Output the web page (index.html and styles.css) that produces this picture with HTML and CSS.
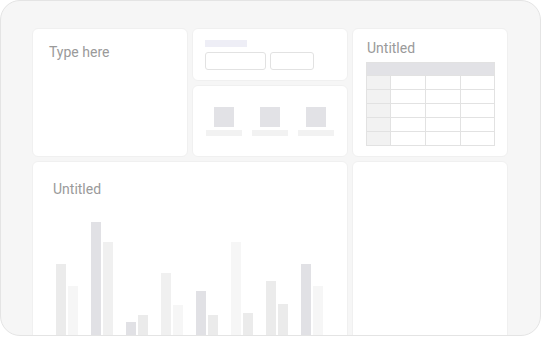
FILE: index.html
```html
<!DOCTYPE html>
<html lang="en">
<head>
<meta charset="utf-8">
<title>Dashboard</title>
<link rel="stylesheet" href="styles.css">
</head>
<body>
<div class="frame">
  <div class="grid">
    <div class="card note"><div class="title">Type here</div></div>
    <div class="mid">
      <div class="card form">
        <div class="label-bar"></div>
        <div class="inputs"><div class="input wide"></div><div class="input narrow"></div></div>
      </div>
      <div class="card icons">
        <div class="item"><div class="sq"></div><div class="cap"></div></div>
        <div class="item"><div class="sq"></div><div class="cap"></div></div>
        <div class="item"><div class="sq"></div><div class="cap"></div></div>
      </div>
    </div>
    <div class="card tablecard">
      <div class="title">Untitled</div>
      <div class="table">
        <div class="th"></div>
        <div class="c first"></div><div class="c"></div><div class="c"></div><div class="c"></div>
        <div class="c first"></div><div class="c"></div><div class="c"></div><div class="c"></div>
        <div class="c first"></div><div class="c"></div><div class="c"></div><div class="c"></div>
        <div class="c first"></div><div class="c"></div><div class="c"></div><div class="c"></div>
        <div class="c first"></div><div class="c"></div><div class="c"></div><div class="c"></div>
      </div>
    </div>
    <div class="card chartcard">
      <div class="title">Untitled</div>
      <div class="chart">
        <div class="group"><div class="bar mid-tone" style="height:76px"></div><div class="bar light" style="height:54px"></div></div>
        <div class="group"><div class="bar dark" style="height:118px"></div><div class="bar soft" style="height:98px"></div></div>
        <div class="group"><div class="bar dark" style="height:18px"></div><div class="bar mid-tone" style="height:25px"></div></div>
        <div class="group"><div class="bar soft" style="height:67px"></div><div class="bar light" style="height:35px"></div></div>
        <div class="group"><div class="bar dark" style="height:49px"></div><div class="bar mid-tone" style="height:25px"></div></div>
        <div class="group"><div class="bar light" style="height:98px"></div><div class="bar mid-tone" style="height:27px"></div></div>
        <div class="group"><div class="bar mid-tone" style="height:59px"></div><div class="bar mid-tone" style="height:36px"></div></div>
        <div class="group"><div class="bar dark" style="height:76px"></div><div class="bar light" style="height:54px"></div></div>
      </div>
    </div>
    <div class="card empty"></div>
  </div>
</div>
</body>
</html>
```

FILE: styles.css
```css
* { box-sizing: border-box; }
html, body { margin: 0; padding: 0; background: #fff; }
body { font-family: Roboto, "Noto Sans", sans-serif; }

.frame {
  width: 541px;
  height: 336px;
  border: 1px solid #e4e4e4;
  border-radius: 20px;
  background: #f6f6f6;
  padding: 27px 0 0 31px;
  overflow: hidden;
}

.grid {
  display: grid;
  grid-template-columns: 156px 156px 156px;
  grid-template-rows: 129px 220px;
  gap: 4px;
}

.card {
  background: #fff;
  border: 1px solid #f0f0f0;
  border-radius: 6px;
}

.title {
  font-size: 14px;
  line-height: 16px;
  color: #9a9a9a;
}

.note { padding: 15px 16px; }

.mid {
  display: grid;
  grid-template-rows: 53px 72px;
  gap: 4px;
}

.form { padding: 11px 12px; }
.label-bar { width: 42px; height: 7px; background: #eeeef6; }
.inputs { display: flex; gap: 4px; margin-top: 5px; }
.input { height: 18px; border: 1px solid #e2e2e2; border-radius: 3px; }
.input.wide { width: 61px; }
.input.narrow { width: 44px; }

.icons {
  display: flex;
  justify-content: center;
  align-items: center;
  gap: 10px;
}
.item { display: flex; flex-direction: column; align-items: center; gap: 3px; }
.sq { width: 20px; height: 20px; background: #e2e2e6; }
.cap { width: 36px; height: 6px; background: #f2f2f2; }

.tablecard { padding: 11px 13px; }
.tablecard .title { margin-left: 1px; }
.table {
  margin-top: 6px;
  display: grid;
  grid-template-columns: 24px 35px 35px 34px;
  width: 129px;
  border-left: 1px solid #e2e2e2;
  border-top: 1px solid #e2e2e2;
}
.th {
  grid-column: 1 / 5;
  height: 13px;
  background: #e2e2e6;
  border-right: 1px solid #e2e2e2;
  border-bottom: 1px solid #e2e2e2;
}
.c {
  height: 14px;
  border-right: 1px solid #e2e2e2;
  border-bottom: 1px solid #e2e2e2;
}
.c.first { background: #f2f2f2; }

.chartcard { grid-column: 1 / 3; padding: 19px 20px 0; }
.chart {
  display: flex;
  align-items: flex-end;
  gap: 13px;
  height: 140px;
  margin: 3px 0 0 3px;
}
.group { display: flex; align-items: flex-end; gap: 2px; }
.bar { width: 10px; }
.bar.dark { background: #e1e1e5; }
.bar.mid-tone { background: #ebebeb; }
.bar.soft { background: #f0f0f0; }
.bar.light { background: #f6f6f6; }
```
